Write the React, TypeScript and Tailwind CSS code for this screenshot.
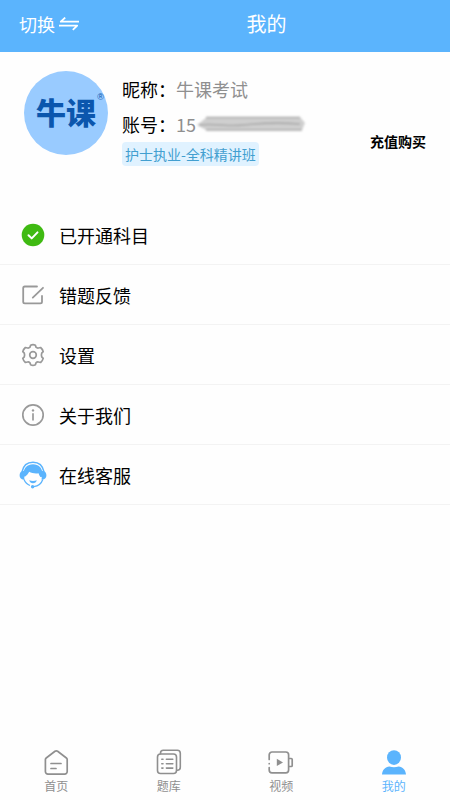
import type { ReactNode } from 'react';

function SwapIcon() {
  return (
    <svg width="20" height="14" viewBox="0 0 20 14" fill="none" stroke="currentColor" strokeWidth="1.8" aria-hidden="true">
      <path d="M20 4.7H1.8L6.2 0.6M0 8.6h18.200L13.800 12.800" strokeLinejoin="round" />
    </svg>
  );
}

function CheckIcon() {
  return (
    <svg width="28" height="28" viewBox="0 0 28 28" fill="none" aria-hidden="true">
      <circle cx="14" cy="14" r="11.3" fill="#3fba12" />
      <path d="M9.500 14.200l3.200 3.200 5.800-6" stroke="#fff" strokeWidth="2" strokeLinecap="round" strokeLinejoin="round" />
    </svg>
  );
}

function EditIcon() {
  return (
    <svg width="28" height="28" viewBox="0 0 28 28" fill="none" stroke="#999" strokeWidth="1.8" strokeLinecap="round" strokeLinejoin="round" aria-hidden="true">
      <path d="M18 5.500H5.800a1.600 1.600 0 0 0-1.600 1.600v13.600a1.600 1.600 0 0 0 1.600 1.600h15.600a1.600 1.600 0 0 0 1.600-1.600V15M13.800 16.600L24 6.800" />
    </svg>
  );
}

function GearIcon() {
  return (
    <svg width="28" height="28" viewBox="0 0 28 28" fill="none" stroke="#999" strokeWidth="1.7" strokeLinejoin="round" aria-hidden="true">
      <path d="M11.600 4.200Q14 3 16.400 4.200L17 6.200Q18 7.200 19.400 7L21.600 6.500Q23.600 8.200 24.200 10.600L22.700 12.200Q22.100 14 22.700 15.800L24.200 17.400Q23.600 19.800 21.600 21.500L19.400 21Q18 20.800 17 21.800L16.400 23.800Q14 25 11.600 23.800L11 21.800Q10 20.800 8.600 21L6.400 21.500Q4.400 19.800 3.800 17.400L5.300 15.800Q5.900 14 5.300 12.200L3.800 10.600Q4.400 8.200 6.400 6.500L8.600 7Q10 7.200 11 6.200Z" />
      <circle cx="14" cy="14" r="3.300" />
    </svg>
  );
}

function InfoIcon() {
  return (
    <svg width="28" height="28" viewBox="0 0 28 28" fill="none" stroke="#999" strokeWidth="1.7" aria-hidden="true">
      <circle cx="14" cy="14" r="10.200" />
      <path d="M14 12.200v7.400" />
      <circle cx="14" cy="9.400" r="1.200" fill="#999" stroke="none" />
    </svg>
  );
}

function ServiceIcon() {
  return (
    <svg width="28" height="28" viewBox="0 0 28 28" fill="none" aria-hidden="true">
      <path d="M3 11C4.200 4.500 8.500 1.200 14 1.200S23.800 4.500 25 11" stroke="#5bb4fd" strokeWidth="1.500" />
      <path d="M4.600 14C4 7 8.500 3.200 14 3.200S24 7 23.400 14l-.6 2h-1.400c-.8-1.200-1.500-2.400-1.900-3.800-3.200.5-6.700 0-9.300-1.400-1.200 2.300-2.500 3.800-4.600 5.200z" fill="#5bb4fd" />
      <path d="M5 10C1.800 9.800.6 11.800.6 14.300s1.400 4.600 4.800 4.400zM23 10c3.200-.2 4.400 1.800 4.400 4.300s-1.400 4.600-4.800 4.400z" fill="#5bb4fd" />
      <path d="M5 18.500c1.300 3 3.300 5 6 6M23.800 18.500c-1.400 4-4.400 6.600-9 7.200" stroke="#5bb4fd" strokeWidth="1.300" />
      <path d="M10.200 19.200c2.400 1 5.200 1 7.600 0-.5 2-1.900 3-3.800 3s-3.300-1-3.800-3z" fill="#5bb4fd" />
      <circle cx="13.600" cy="25.800" r="1.700" fill="#5bb4fd" />
    </svg>
  );
}

function HomeIcon() {
  return (
    <svg width="28" height="28" viewBox="0 0 28 28" fill="none" stroke="currentColor" strokeWidth="1.700" strokeLinecap="round" strokeLinejoin="round" aria-hidden="true">
      <path d="M13 3.300a2.200 2.200 0 0 1 2.600 0L24.400 10a2 2 0 0 1 .8 1.600v12a2.500 2.500 0 0 1-2.500 2.500H5.900a2.500 2.500 0 0 1-2.500-2.500v-12A2 2 0 0 1 4.200 10zM9 15.500h10M9 20.500h5" />
    </svg>
  );
}

function BankIcon() {
  return (
    <svg width="28" height="28" viewBox="0 0 28 28" fill="none" stroke="currentColor" strokeWidth="1.600" strokeLinecap="round" strokeLinejoin="round" aria-hidden="true">
      <rect x="2.500" y="6" width="19" height="19.500" rx="3" />
      <path d="M5.500 5.800V5A2.800 2.800 0 0 1 8.300 2.200h14a3 3 0 0 1 3 3v14a3 3 0 0 1-3 3h-.6" />
      <path d="M6.800 11.300h1.200M11.400 11.300h6.400M6.800 15.700h1.200M11.400 15.700h6.400M6.800 20.100h1.200M11.400 20.100h6.400" />
    </svg>
  );
}

function VideoIcon() {
  return (
    <svg width="28" height="28" viewBox="0 0 28 28" fill="none" stroke="currentColor" strokeWidth="1.700" strokeLinecap="round" strokeLinejoin="round" aria-hidden="true">
      <path d="M2.200 11.500V6.800a2.800 2.800 0 0 1 2.800-2.800h13.800a2.800 2.800 0 0 1 2.800 2.800v15.200a2.800 2.800 0 0 1-2.800 2.800H5a2.800 2.800 0 0 1-2.800-2.800V19.500M2.200 15.500v.2M22 10.500h2.200a1 1 0 0 1 1 1v6a1 1 0 0 1-1 1H22" />
      <path d="M9.800 10.700v7.400l6.200-3.700z" fill="currentColor" stroke="none" />
    </svg>
  );
}

function UserIcon() {
  return (
    <svg width="28" height="28" viewBox="0 0 28 28" fill="currentColor" aria-hidden="true">
      <ellipse cx="14" cy="9.600" rx="7" ry="7.400" />
      <path d="M2 26.600c.2-4.800 3.400-7.800 7.400-8.200 3 1 6.200 1 9.200 0 4 .4 7.200 3.400 7.400 8.200z" />
    </svg>
  );
}

function HiddenDigits() {
  return (
    <svg width="112" height="20" viewBox="0 0 112 20" fill="none" role="img" aria-label="已隐藏">
      <defs>
        <filter id="smudge" x="-10%" y="-30%" width="120%" height="160%">
          <feGaussianBlur stdDeviation="1" />
        </filter>
      </defs>
      <g filter="url(#smudge)">
        <path d="M1 11L11 3H104L109 9L106 16H10Z" fill="#cfcfcf" />
        <path d="M10 3.500H104M3 11C20 9 30 13 48 11S80 8 104 10M10 16H106" stroke="#a8a8a8" strokeWidth="1.600" />
      </g>
    </svg>
  );
}

const menu: { label: string; icon: ReactNode }[] = [
  { label: '已开通科目', icon: <CheckIcon /> },
  { label: '错题反馈', icon: <EditIcon /> },
  { label: '设置', icon: <GearIcon /> },
  { label: '关于我们', icon: <InfoIcon /> },
  { label: '在线客服', icon: <ServiceIcon /> },
];

const tabs: { label: string; icon: ReactNode; active?: boolean }[] = [
  { label: '首页', icon: <HomeIcon /> },
  { label: '题库', icon: <BankIcon /> },
  { label: '视频', icon: <VideoIcon /> },
  { label: '我的', icon: <UserIcon />, active: true },
];

export default function App() {
  return (
    <div className="flex min-h-screen flex-col bg-[#fefefe] font-['Noto_Sans_CJK_SC',sans-serif] text-black">
      <header className="flex h-[52px] items-center bg-[#5bb4fd] pb-1 text-white">
        <button type="button" className="flex items-center gap-1 pr-1 pl-[19px] text-lg leading-6">
          切换
          <SwapIcon />
        </button>
        <h1 className="flex-1 text-center text-xl leading-6">我的</h1>
      </header>

      <main className="flex-1">
        <section className="flex px-6 pt-[19px] pb-[39px]">
          <div className="relative flex size-[84px] items-center justify-center rounded-full bg-[#99cbff] text-[#0b56ad]">
            <span className="pb-1 text-3xl leading-9 font-black">牛课</span>
            <span className="absolute top-5 right-1 font-['Liberation_Sans',sans-serif] text-[9px] leading-3">®</span>
          </div>
          <div className="ml-3.5 flex flex-1 flex-col items-start text-lg">
            <p className="flex h-[35px] items-center">
              昵称：<span className="text-[#8f8f8f]">牛课考试</span>
            </p>
            <p className="flex h-[35px] items-center">
              账号：<span className="text-[#8f8f8f]">15</span>
              <HiddenDigits />
            </p>
            <span className="mt-px rounded bg-[#e0f2ff] px-[3px] text-sm leading-6 text-[#429fd0]">护士执业-全科精讲班</span>
          </div>
          <button type="button" className="mt-[60px] self-start text-sm leading-5 font-bold">
            充值购买
          </button>
        </section>

        <ul>
          {menu.map((item) => (
            <li key={item.label} className="border-b border-[#f3f3f3]">
              <button type="button" className="flex h-[59px] w-full items-center gap-3 px-[19px] text-left text-lg">
                {item.icon}
                {item.label}
              </button>
            </li>
          ))}
        </ul>
      </main>

      <nav className="grid grid-cols-4 pb-1">
        {tabs.map((tab) => (
          <a
            key={tab.label}
            href="#"
            aria-current={tab.active ? 'page' : undefined}
            className={`flex flex-col items-center text-xs leading-5 ${tab.active ? 'text-[#5bb4fd]' : 'text-[#8f8f8f]'}`}
          >
            {tab.icon}
            {tab.label}
          </a>
        ))}
      </nav>
    </div>
  );
}
